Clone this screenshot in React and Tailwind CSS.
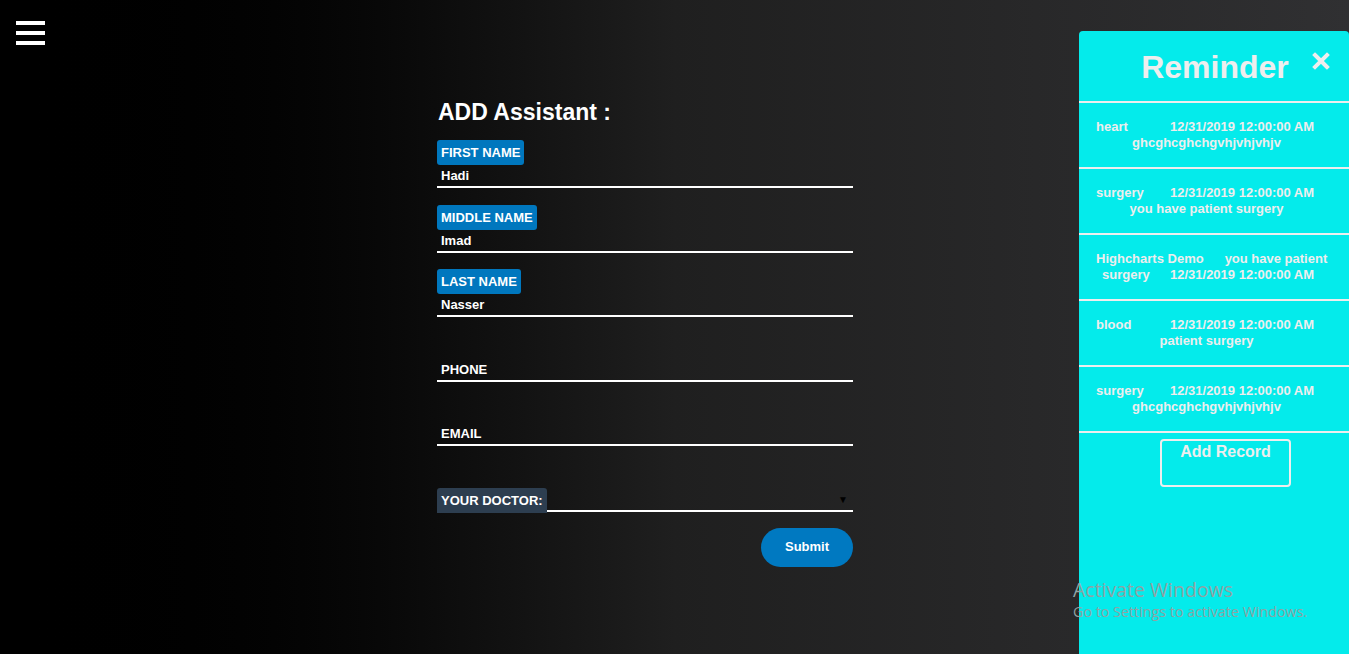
import React from 'react'

const fields = [
    { label: 'FIRST NAME', value: 'Hadi' },
    { label: 'MIDDLE NAME', value: 'Imad' },
    { label: 'LAST NAME', value: 'Nasser' },
    { label: 'PHONE', value: '' },
    { label: 'EMAIL', value: '' },
]

const DATE = '12/31/2019 12:00:00 AM'

const reminders = [
    { title: 'heart', desc: 'ghcghcghchgvhjvhjvhjv' },
    { title: 'surgery', desc: 'you have patient surgery' },
    { title: 'Highcharts Demo', desc: 'you have patient', wrapped: 'surgery' },
    { title: 'blood', desc: 'patient surgery' },
    { title: 'surgery', desc: 'ghcghcghchgvhjvhjvhjv' },
]

function Field({ label, value }) {
    return (
        <div className="mb-[16.5px]">
            {/* etiqueta flotante, solo visible si hay valor */}
            <div className="h-[25px] flex">
                {value && (
                    <span className="h-[25px] px-[4px] rounded-[3px] bg-[#0077be] text-white text-[13px] font-bold leading-[25px]">
                        {label}
                    </span>
                )}
            </div>
            <div className="h-[23px] border-b-2 border-white pl-[4px] text-[13px] font-bold leading-[21px] text-white">
                {value || label}
            </div>
        </div>
    )
}

function ReminderRow({ item }) {
    return (
        <div className="h-[66px] border-b-2 border-[#eeeeee] py-4 pl-[17px] pr-[32px] text-[13px] font-bold leading-4 text-[#eeeeee] whitespace-nowrap">
            {item.wrapped ? (
                <>
                    <div className="flex">
                        <span className="shrink-0">{item.title}</span>
                        <span className="shrink-0 ml-[21px]">{item.desc}</span>
                    </div>
                    <div className="flex">
                        <span className="shrink-0 w-[74px] pl-[6px]">{item.wrapped}</span>
                        <span className="shrink-0">{DATE}</span>
                    </div>
                </>
            ) : (
                <>
                    <div className="flex">
                        <span className="shrink-0 w-[74px]">{item.title}</span>
                        <span className="shrink-0">{DATE}</span>
                    </div>
                    <div className="text-center">{item.desc}</div>
                </>
            )}
        </div>
    )
}

export default function App() {
    return (
        <div
            className="relative h-[654px] w-full overflow-hidden flex bg-gradient-to-r from-[#000000] via-[#1f1f1f] to-[#303032]"
            style={{ fontFamily: '"Liberation Sans", Arial, sans-serif' }}
        >
            {/* zona principal */}
            <div className="flex-1 pt-[21px]">
                <div className="ml-[16px] flex flex-col gap-[6px] w-[29px]">
                    <div className="h-[4px] bg-white"></div>
                    <div className="h-[4px] bg-white"></div>
                    <div className="h-[4px] bg-white"></div>
                </div>

                <div className="ml-[437px] w-[416px] mt-[54px]">
                    <h2 className="text-[23px] font-bold leading-[26px] text-white pl-[1px] mb-[15px]">
                        ADD Assistant :
                    </h2>

                    {fields.map(f => (
                        <Field key={f.label} label={f.label} value={f.value} />
                    ))}

                    <div>
                        <div className="h-[25px]"></div>
                        <div className="h-[24px] border-b-2 border-white flex items-start justify-between">
                            <span className="h-[25px] px-[4px] rounded-t-[3px] bg-[#2d3e50] text-white text-[13px] font-bold leading-[25px]">
                                YOUR DOCTOR:
                            </span>
                            <span className="mr-[5px] mt-[6px] text-[10px] leading-[12px] text-black">▼</span>
                        </div>
                    </div>

                    <div className="flex justify-end mt-[16px]">
                        <button className="w-[92px] h-[39px] rounded-full bg-[#0079c1] text-white text-[13px] font-bold">
                            Submit
                        </button>
                    </div>
                </div>
            </div>

            {/* panel de recordatorios */}
            <aside className="w-[270px] mt-[31px] h-[623px] bg-[#04ebeb] rounded-t-[4px] flex flex-col">
                <div className="h-[72px] border-b-2 border-[#eeeeee] flex items-center relative">
                    <h3 className="w-full text-center pl-[2px] text-[32px] font-bold text-[#eeeeee] leading-none mt-[2px]">
                        Reminder
                    </h3>
                    <svg className="absolute right-[19px] top-[21px]" width="18" height="18" viewBox="0 0 18 18">
                        <path d="M3 3 L15 15 M15 3 L3 15" stroke="#eeeeee" strokeWidth="4" strokeLinecap="square" />
                    </svg>
                </div>
                {reminders.map((r, i) => (
                    <ReminderRow key={i} item={r} />
                ))}
                <button className="ml-[81px] mt-[6px] w-[131px] h-[48px] border-2 border-[#eeeeee] rounded-[4px] text-[16px] font-bold text-[#eeeeee] leading-[18px] flex justify-center pt-[2px]">
                    Add Record
                </button>
            </aside>

            {/* marca de agua de windows */}
            <div
                className="absolute left-[1073px] top-[578px] text-[#8fa3a3] pointer-events-none whitespace-nowrap"
                style={{ fontFamily: '"Open Sans", "Noto Sans", sans-serif' }}
            >
                <div className="text-[19.5px] leading-[24px]">Activate Windows</div>
                <div className="text-[14.3px] leading-[20px]">Go to Settings to activate Windows.</div>
            </div>
        </div>
    )
}
